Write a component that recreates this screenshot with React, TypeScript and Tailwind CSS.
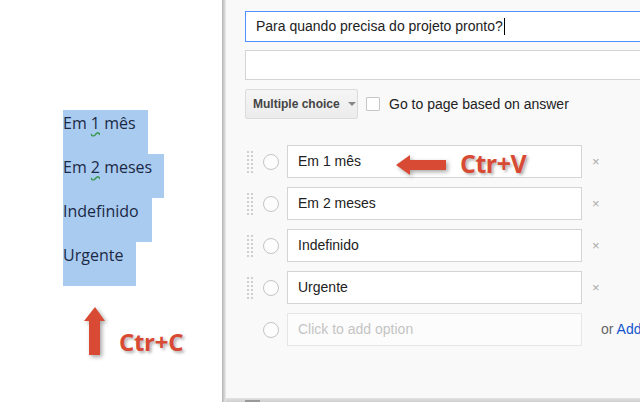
const options = ["Em 1 mês", "Em 2 meses", "Indefinido", "Urgente"];

const copied = [
  { label: "Em ", num: "1", rest: " mês", w: "w-[85px]" },
  { label: "Em ", num: "2", rest: " meses", w: "w-[101px]" },
  { label: "Indefinido", num: "", rest: "", w: "w-[89px]" },
  { label: "Urgente", num: "", rest: "", w: "w-[73px]" },
];

function Grip() {
  return (
    <svg width="6" height="22" viewBox="0 0 6 22" className="shrink-0">
      {[0, 4, 8, 12, 16, 20].map((y) => (
        <g key={y} fill="#cfcfcf">
          <rect x="0" y={y} width="2" height="2" />
          <rect x="4" y={y} width="2" height="2" />
        </g>
      ))}
    </svg>
  );
}

function Radio() {
  return <div className="w-[16px] h-[16px] rounded-full border border-[#c4c4c4] bg-[#fdfdfd] shrink-0" />;
}

function App() {
  return (
    <div className="flex w-[640px] h-[402px] overflow-hidden bg-white font-['Liberation_Sans',Arial,sans-serif]">
      {/* word document side */}
      <div className="w-[222px] shrink-0 bg-white flex flex-col pt-[110px] pl-[63px]">
        {copied.map((c) => (
          <div key={c.label + c.rest} className={`${c.w} h-[44px] bg-[#a9cbf0] pt-[3px] text-[16px] leading-[21px] text-[#1b2945] font-['Open_Sans',sans-serif] whitespace-nowrap`}>
            {c.label}
            {c.num && <span className="underline decoration-wavy decoration-[#3c9a52] underline-offset-2">{c.num}</span>}
            {c.rest}
          </div>
        ))}
        <div className="flex items-end mt-[21px] ml-[21px]">
          <svg width="22" height="50" viewBox="0 0 22 50" className="drop-shadow-[2px_2px_2px_rgba(0,0,0,0.35)]">
            <polygon points="11,0 21,14 16,14 16,48 5,48 5,14 0,14" fill="#d84a34" />
          </svg>
          <span className="ml-[13px] mb-[1px] text-[24px] leading-[28px] font-bold text-[#d84a34] font-['Open_Sans',sans-serif] tracking-[-0.3px] [text-shadow:2px_2px_3px_rgba(0,0,0,0.3)]">
            Ctr+C
          </span>
        </div>
      </div>

      {/* forms editor side */}
      <div className="w-[4px] shrink-0 bg-gradient-to-r from-[#b3b3b3] to-[#ececec]" />
      <div className="flex-1 relative bg-[#f9f9f9] pl-[19px]">
        <div className="w-[420px] mt-[11px] h-[31px] border border-[#4d90fe] bg-white flex items-center pl-[10px] text-[14px] text-[#222]">
          Para quando precisa do projeto pronto?
          <span className="inline-block w-px h-[17px] bg-black ml-[1px]" />
        </div>
        <div className="w-[420px] mt-[8px] h-[30px] border border-[#d4d4d4] bg-white" />

        <div className="flex items-center mt-[9px]">
          <div className="w-[113px] h-[30px] border border-[#dcdcdc] rounded-[2px] bg-gradient-to-b from-[#f5f5f5] to-[#ececec] flex items-center pl-[7px] text-[12px] font-bold text-[#444]">
            Multiple choice
            <span className="ml-[8px] w-0 h-0 border-l-[4px] border-r-[4px] border-t-[4px] border-l-transparent border-r-transparent border-t-[#888]" />
          </div>
          <div className="ml-[8px] w-[14px] h-[14px] border border-[#c6c6c6] bg-white rounded-[1px]" />
          <span className="ml-[9px] text-[14px] text-[#222]">Go to page based on answer</span>
        </div>

        <div className="flex flex-col gap-[9px] mt-[26px]">
          {options.map((o, i) => (
            <div key={o} className="flex items-center h-[33px]">
              <div className="ml-[2px]">
                <Grip />
              </div>
              <div className="ml-[10px]">
                <Radio />
              </div>
              <div className="relative ml-[8px] w-[295px] h-[33px] border border-[#d4d4d4] bg-white flex items-center pl-[10px] text-[14px] text-[#222]">
                {o}
                {i === 0 && (
                  <div className="absolute left-[108px] top-[6px] flex items-center">
                    <svg width="52" height="22" viewBox="0 0 52 22" className="drop-shadow-[2px_2px_2px_rgba(0,0,0,0.35)]">
                      <polygon points="0,11 14,1 14,6 50,6 50,16 14,16 14,21" fill="#d84a34" />
                    </svg>
                    <span className="ml-[12px] -mt-[3px] text-[25px] leading-[28px] font-bold text-[#d84a34] font-['Open_Sans',sans-serif] tracking-[-0.5px] [text-shadow:2px_2px_3px_rgba(0,0,0,0.3)]">
                      Ctr+V
                    </span>
                  </div>
                )}
              </div>
              <span className="ml-[10px] text-[13px] text-[#aaa]">×</span>
            </div>
          ))}
          <div className="flex items-center h-[33px]">
            <div className="w-[8px]" />
            <div className="ml-[10px]">
              <Radio />
            </div>
            <div className="ml-[8px] w-[295px] h-[33px] border border-[#e6e6e6] bg-[#fcfcfc] flex items-center pl-[10px] text-[14px] text-[#c4c4c4]">
              Click to add option
            </div>
            <span className="ml-[19px] text-[14px] text-[#666] whitespace-nowrap">
              or <span className="text-[#1155cc]">Add "Other"</span>
            </span>
          </div>
        </div>

        <div className="absolute left-0 right-0 bottom-0 h-[4px] bg-gradient-to-b from-[#e2e2e2] to-[#cfcfcf]">
          <div className="ml-[19px] w-[15px] h-[2px] mt-[2px] bg-[#999]" />
        </div>
      </div>
    </div>
  );
}

export default App;
